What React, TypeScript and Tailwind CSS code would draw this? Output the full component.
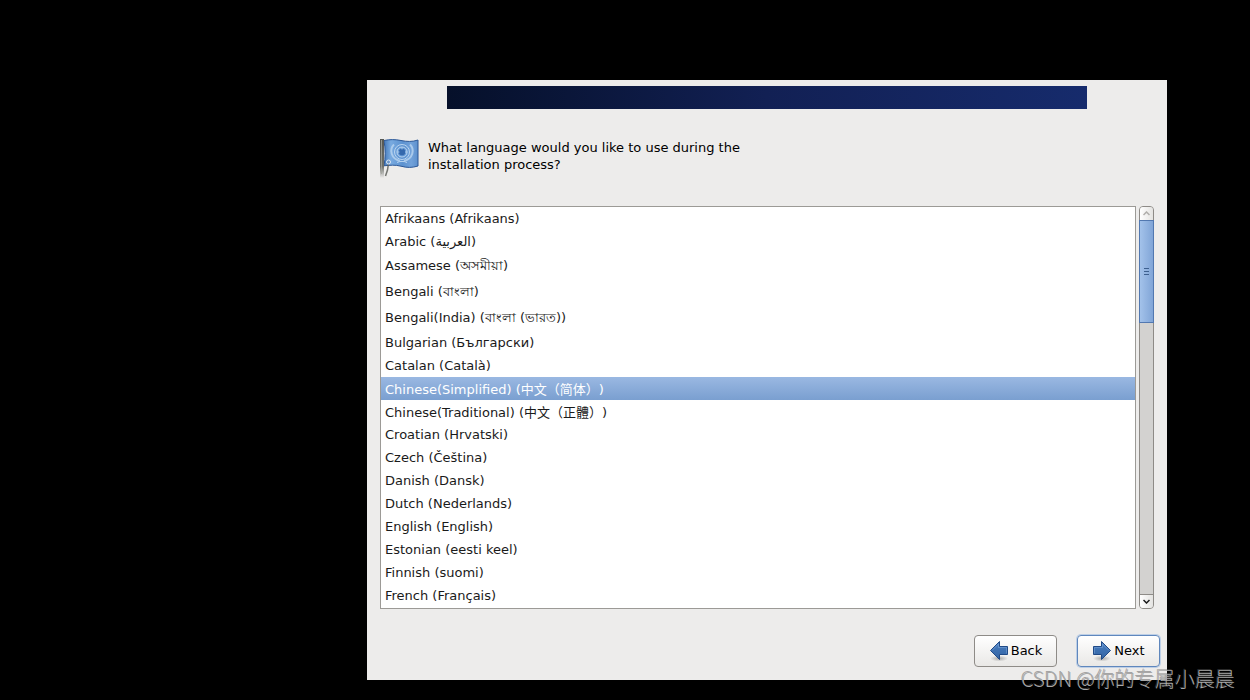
import { useState } from "react";

const languages = [
  { name: "Afrikaans (Afrikaans)" },
  { name: "Arabic (العربية)" },
  { name: "Assamese (অসমীয়া)", tall: true },
  { name: "Bengali (বাংলা)", tall: true },
  { name: "Bengali(India) (বাংলা (ভারত))", tall: true },
  { name: "Bulgarian (Български)" },
  { name: "Catalan (Català)" },
  { name: "Chinese(Simplified) (中文（简体）)" },
  { name: "Chinese(Traditional) (中文（正體）)" },
  { name: "Croatian (Hrvatski)" },
  { name: "Czech (Čeština)" },
  { name: "Danish (Dansk)" },
  { name: "Dutch (Nederlands)" },
  { name: "English (English)" },
  { name: "Estonian (eesti keel)" },
  { name: "Finnish (suomi)" },
  { name: "French (Français)" },
];

function FlagIcon() {
  return (
    <svg width="40" height="40" viewBox="0 0 40 40" aria-hidden="true">
      <defs>
        <linearGradient id="pole" x1="0" x2="0" y1="0" y2="1">
          <stop offset="0" stopColor="#555753" />
          <stop offset="0.7" stopColor="#6d6f6a" />
          <stop offset="1" stopColor="#6d6f6a" stopOpacity="0" />
        </linearGradient>
        <linearGradient id="cloth" x1="0" x2="1" y1="0" y2="0">
          <stop offset="0" stopColor="#4478b8" />
          <stop offset="0.2" stopColor="#78aae0" />
          <stop offset="0.55" stopColor="#5c92d0" />
          <stop offset="0.8" stopColor="#72a2da" />
          <stop offset="1" stopColor="#5d90cd" />
        </linearGradient>
      </defs>
      <path d="M4 1.500C10 .3 15 .3 21 1.500s11 1.500 17-.5v26c-6 1.900-11 1.800-17 .2s-11-1-17-.4C5.500 19 5.500 10 4 1.500z" fill="url(#cloth)" stroke="#2c5796" />
      <g fill="none" stroke="#b9d4f0">
        <circle cx="22" cy="13" r="7.500" strokeWidth="1" />
        <circle cx="22" cy="13" r="5" strokeWidth="1" />
        <path d="M14 5.500c-5 5-3 14 6 16.500M30 5.500c5 5 3 14-6 16.500" strokeWidth="2" opacity=".8" />
        <path d="M17 23.500c3-1.500 7-1.500 10 0" />
      </g>
      <circle cx="22" cy="13" r="3.200" fill="#3468ad" />
      <path d="M17 13h2.500M22 8v2.500M25 13h2.500" fill="none" stroke="#b9d4f0" strokeWidth=".8" />
      <rect x="0" y="0" width="4" height="39" fill="url(#pole)" />
      <path d="M1.500 1v34" stroke="#a4a69f" strokeWidth="1" opacity=".8" />
      <path d="M8.500 24.500L7.500 31l-2 6" fill="none" stroke="#555753" strokeWidth="1.500" opacity=".8" />
      <circle cx="8.500" cy="23" r="2" fill="#6f98ca" stroke="#dce7f3" />
    </svg>
  );
}

function ArrowIcon({ flip = false }: { flip?: boolean }) {
  return (
    <svg width="20" height="22" viewBox="0 0 20 22" className={flip ? "-scale-x-100" : ""} aria-hidden="true">
      <defs>
        <linearGradient id="arrow" x1="0" x2="0" y1="0" y2="1">
          <stop offset="0" stopColor="#4f82c2" />
          <stop offset="0.5" stopColor="#3d70b1" />
          <stop offset="1" stopColor="#3465a4" />
        </linearGradient>
        <radialGradient id="shade">
          <stop offset="0" stopColor="#000" stopOpacity=".3" />
          <stop offset="1" stopColor="#000" stopOpacity="0" />
        </radialGradient>
      </defs>
      <ellipse cx="10" cy="18.500" rx="9" ry="3" fill="url(#shade)" />
      <path d="M1.500 6.500h8V1.500L18.500 10.500l-9 9v-5h-8z" fill="url(#arrow)" stroke="#204a87" />
      <path d="M2.500 13.500v-6h8V4L17 10.500" fill="none" stroke="#7ea8dc" opacity=".5" />
    </svg>
  );
}

function Scrollbar() {
  return (
    <div className="flex w-[15px] flex-col rounded border border-[#8e8b87] bg-[#d3d2d0]">
      <button aria-label="Scroll up" className="flex h-[13px] items-center justify-center rounded-t-[3px] bg-gradient-to-r from-white to-[#e4e3e1]">
        <svg width="7" height="5" viewBox="0 0 7 5" fill="none" stroke="#b0aeab" strokeWidth="1.500">
          <path d="M.5 4l3-3 3 3" />
        </svg>
      </button>
      <div className="-mx-px flex h-[103px] items-center justify-center border border-[#5278b0] bg-gradient-to-r from-[#a3c2ea] to-[#81a5d7]">
        <svg width="5" height="7" viewBox="0 0 5 7" stroke="#3d608f">
          <path d="M0 .5h5M0 3.500h5M0 6.500h5" />
        </svg>
      </div>
      <button aria-label="Scroll down" className="mt-auto flex h-[14px] items-center justify-center rounded-b-[3px] border-t border-[#8e8b87] bg-gradient-to-r from-white to-[#e4e3e1]">
        <svg width="7" height="5" viewBox="0 0 7 5" fill="none" stroke="#1a1a1a" strokeWidth="1.500">
          <path d="M.5 1l3 3 3-3" />
        </svg>
      </button>
    </div>
  );
}

export default function App() {
  const [language, setLanguage] = useState(languages[7].name);

  return (
    <div className="flex min-h-screen items-start justify-end bg-black pt-20 pr-[83px] pb-5 font-['DejaVu_Sans','Noto_Sans_CJK_SC',sans-serif] text-[13px] leading-[17px] text-black [text-spacing-trim:space-all]">
      <main className="w-[64vw] bg-[#edeceb] pt-[6px] pb-[13px]">
        <div className="mx-20 h-[23px] bg-gradient-to-r from-[#06102a] via-[#122054] to-[#162b6c]" />

        <div className="mt-[30px] flex items-start gap-2 px-[13px]">
          <FlagIcon />
          <label htmlFor="language" className="w-[330px]">
            What language would you like to use during the installation process?
          </label>
        </div>

        <div className="mt-[27px] flex gap-[3px] px-[13px]">
          <select
            id="language"
            size={17}
            value={language}
            onChange={(e) => setLanguage(e.target.value)}
            className="h-[403px] min-w-0 flex-1 appearance-none overflow-hidden border border-[#9c9a96] bg-white text-[#1a1a1a] outline-none"
          >
            {languages.map((l) => (
              <option
                key={l.name}
                value={l.name}
                className={`${l.tall ? "h-[26px]" : "h-[23px]"} flex min-h-0 items-center px-1 py-0 checked:bg-gradient-to-b checked:from-[#9ab8e2] checked:to-[#7a9fd0] checked:text-white`}
              >
                {l.name}
              </option>
            ))}
          </select>
          <Scrollbar />
        </div>

        <div className="mt-[26px] flex justify-end gap-5 pr-[7px]">
          <button className="flex h-8 w-[83px] items-center justify-center gap-[2px] rounded border border-[#8e8b87] bg-gradient-to-b from-white to-[#e9e8e6] pb-px">
            <ArrowIcon flip />
            Back
          </button>
          <button className="flex h-8 w-[83px] items-center justify-center gap-[2px] rounded border border-[#5f87bd] bg-gradient-to-b from-white to-[#e9e8e6] pb-px shadow-[0_0_0_1px_#bdcfe6]">
            <ArrowIcon />
            Next
          </button>
        </div>
      </main>

      <p className="absolute right-[15px] bottom-[6px] font-['Noto_Sans_CJK_SC',sans-serif] text-[20px] leading-[30px] font-light text-[#a8a8a8] [text-shadow:-1px_-1px_0_#6668]">
        CSDN @你的专属小晨晨
      </p>
    </div>
  );
}
